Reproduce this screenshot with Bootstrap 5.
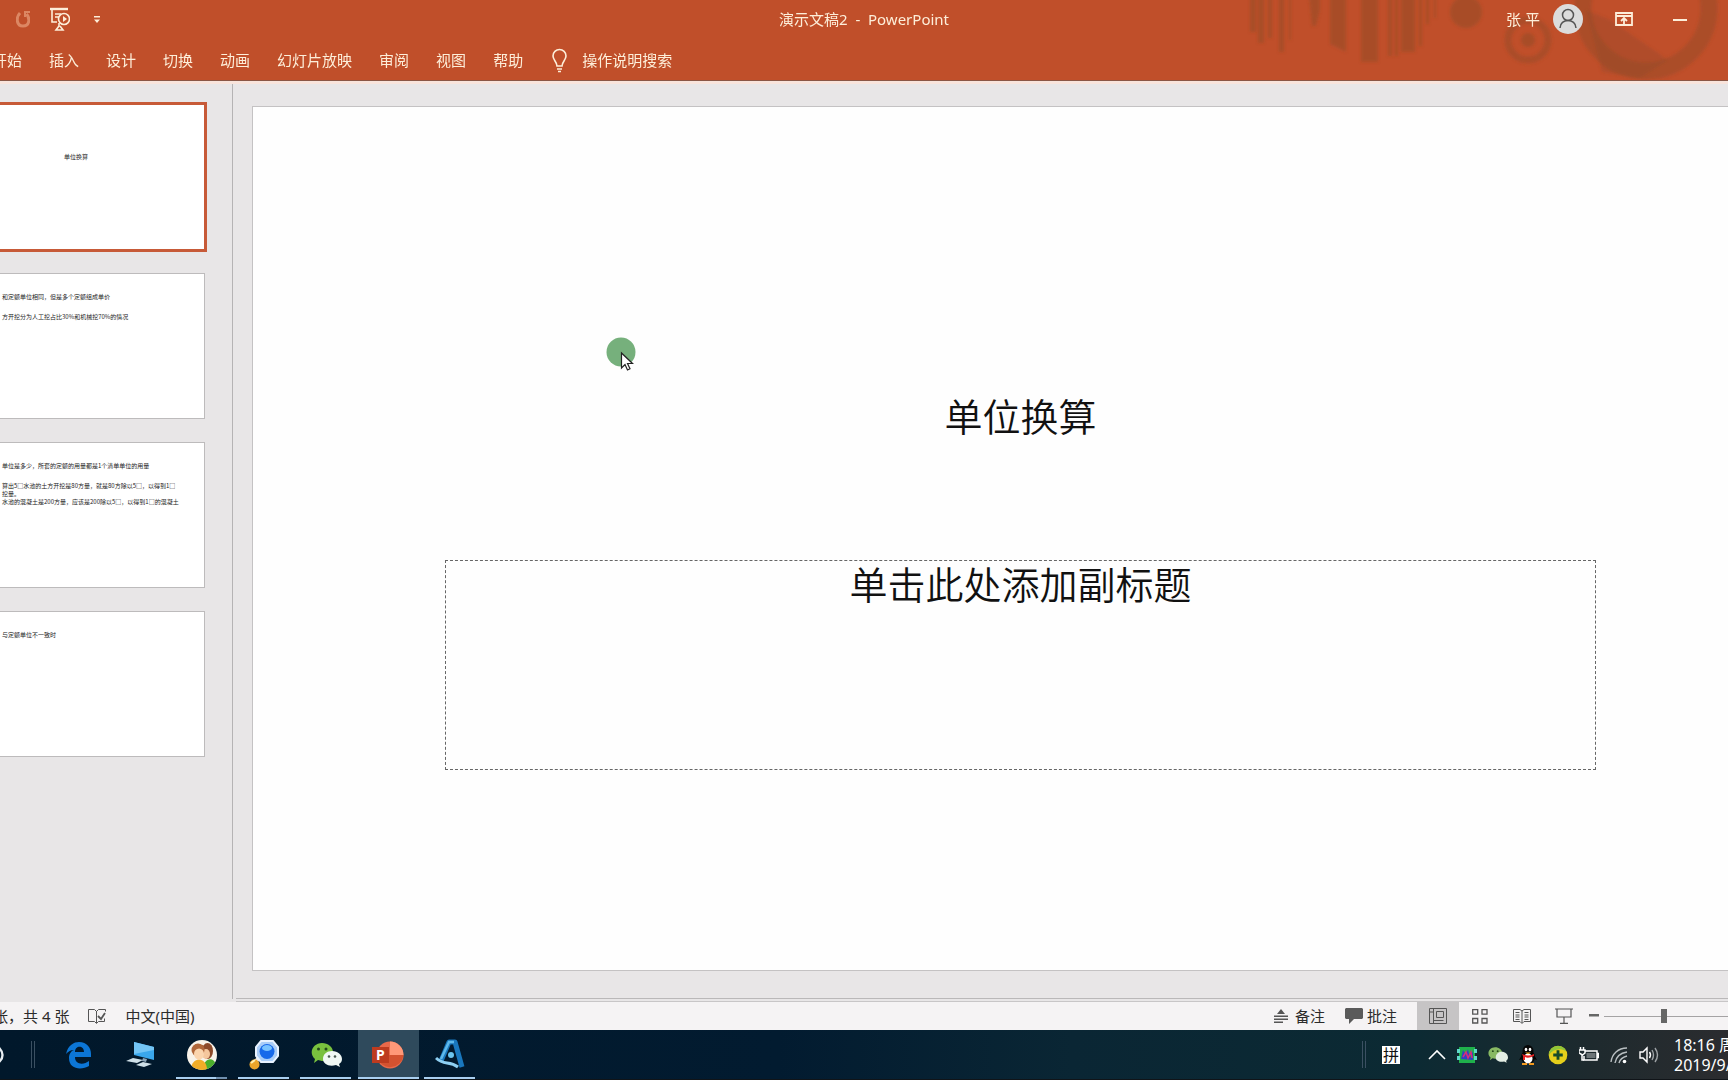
<!DOCTYPE html>
<html lang="zh-CN">
<head>
<meta charset="utf-8">
<meta name="viewport" content="width=device-width, initial-scale=1">
<title>演示文稿2 - PowerPoint</title>
<link rel="stylesheet" href="https://cdn.jsdelivr.net/npm/bootstrap@5.3.0/dist/css/bootstrap.min.css">
<style>
body{font-family:"Noto Sans","Noto Sans CJK SC",sans-serif;font-size:15px;line-height:20px;background:#e8e6e7;color:#222}
button{font:inherit;color:inherit;background:none;border:0;padding:0}
svg{display:block;flex:none}
.app-head{background:#c04f2a;color:#fdeed9;border-bottom:1px solid #8a5645;height:81px}
.head-art{right:0;top:0}
.title-row{height:37px}
.title-side{flex:1 1 0}
.tabs-row{height:46px;gap:27px;margin-left:-8px}
.tell-me{gap:14px}
.avatar-dot{width:30px;height:30px;background:#dcdcdc;color:#555;margin:0 24px 0 13px}
.work-area{border-top:3px solid #f8e4dc}
.thumb-pane{width:233px;border-right:1px solid #b5b3b4;padding-top:20px;gap:23px;margin-bottom:3px}
.thumb-slide{width:258px;height:146px;margin-left:-53px;flex:none;background:#fff;border:1px solid #bdbbbc;text-align:left;font-family:"Noto Sans CJK SC",sans-serif;font-size:6px;line-height:8px;color:#222;padding:19px 0 0 54px;white-space:nowrap;overflow:hidden;display:flex;flex-direction:column}
.thumb-slide.active{border-color:#c75a38;box-shadow:0 0 0 2px #c75a38;padding:48px 0 0;text-align:center}
.thumb-body{margin-top:12px}
.stage{padding:22px 0 0 19px}
.stage-foot{border-top:1px solid #bab8b9;height:4px;margin-left:3px;border-bottom:1px solid #c8c6c7}
.slide-page{width:1537px;height:865px;flex:none;background:#fefefe;border:1px solid #c4c2c3;color:#111;font-family:"Noto Sans CJK SC",sans-serif;font-weight:350;font-size:38px;line-height:44px;padding-top:286px}
.sub-box{width:75%;height:210px;border:1px dashed #666;margin-top:123px}
.click-mark{left:606px;top:337px}
.status-bar{height:28px;background:#f5f3f4;color:#2b2b2b}
.status-left{gap:19px;margin-left:-7px}
.view-btn{width:42px;height:28px;display:flex;align-items:center;justify-content:center;color:#666}
.view-btn.active{background:#c6c4c5}
.zoom-range{appearance:none;-webkit-appearance:none;width:124px;height:16px;background:linear-gradient(#a5a3a4,#a5a3a4) center/100% 1px no-repeat;margin:0}
.zoom-range::-webkit-slider-thumb{-webkit-appearance:none;width:6px;height:14px;background:#666;border:0}
.task-bar{height:50px;background:linear-gradient(90deg,#01182b 0%,#021b30 45%,#0a2634 62%,#0c2a33 82%,#1e2a2e 92%,#2b2c2f 100%);color:#fff;border-bottom:1px solid #101418}
.task-btn{width:62px;height:50px;display:flex;align-items:center;justify-content:center;position:relative}
.task-btn.running::after{content:"";position:absolute;left:5px;right:6px;bottom:0;height:3px;background:#a9cff0}
.task-btn.grouped::after{background:linear-gradient(90deg,#a9cff0 78%,#6f8fae 78%)}
.task-btn.front::before{content:"";position:absolute;inset:0 0 0 1px;background:#2f4a5c}
.task-btn.front::after{left:1px;right:0}
.task-btn svg{position:relative}
.bar-pair{width:4px;height:27px;border:solid #3b5062;border-width:0 1px}
.ime-box{width:18px;height:18px;background:#fff;color:#111;font-size:16px;line-height:18px;text-align:center}
.tray-set{gap:11px;margin:0 15px 0 11px}
.clock{width:54px;font-size:16px;white-space:nowrap;text-align:left}
</style>
<script src="https://cdn.jsdelivr.net/npm/bootstrap@5.3.0/dist/js/bootstrap.bundle.min.js"></script>
</head>
<body class="vh-100 d-flex flex-column overflow-hidden position-relative">

<header class="app-head flex-shrink-0 position-relative overflow-hidden">
  <svg class="head-art position-absolute" width="488" height="80" viewBox="1240 0 488 80" aria-hidden="true">
    <defs><filter id="soft" x="-5%" y="-5%" width="110%" height="110%"><feGaussianBlur stdDeviation="1.5"/></filter></defs>
    <g filter="url(#soft)">
    <g fill="#8c4a28" opacity=".45">
      <rect x="1250" y="-5" width="6" height="37"/><rect x="1258" y="-5" width="6" height="48"/><rect x="1268" y="-5" width="4" height="43"/><rect x="1279" y="-5" width="5" height="57"/><rect x="1289" y="-5" width="2" height="45"/>
      <path d="M1309-5h11v15l-4 16h-4z"/><path d="M1330-5h16v57l-16-8z"/><rect x="1361" y="-5" width="17" height="67"/>
      <rect x="1388" y="-5" width="4" height="61"/><rect x="1395" y="-5" width="3" height="61"/><rect x="1401" y="-5" width="14" height="57"/><rect x="1419" y="-5" width="3" height="51"/><rect x="1426" y="-5" width="3" height="29"/><rect x="1434" y="-5" width="2" height="23"/>
      <circle cx="1466" cy="12" r="16"/><circle cx="1528" cy="40" r="7"/>
      <path d="M1586 10L1610 20 1668 60 1640 78 1602 72z" opacity=".7"/>
    </g>
    <circle cx="1528" cy="40" r="20" fill="none" stroke="#8c4a28" stroke-width="7" opacity=".4"/>
    <circle cx="1646" cy="8" r="63" fill="none" stroke="#8c4a28" stroke-width="17" opacity=".4"/>
    </g>
  </svg>
  <div class="title-row d-flex align-items-center position-relative">
    <div class="title-side d-flex align-items-center">
      <button class="ms-3" aria-label="恢复" disabled><svg width="14" height="18" viewBox="0 0 14 18" fill="none" stroke="#dc8763" stroke-width="3"><path d="M4 3C0 7 0 16 7 16s7-8 3.500-12"/><path d="M9 1v6M8 2h6" stroke-width="2"/></svg></button>
      <button class="ms-3" aria-label="从头开始"><svg class="ms-1" width="20" height="24" viewBox="0 0 20 24" fill="none" stroke="#fdeed9" stroke-width="1.6"><path d="M0 2h18" stroke-width="2.4"/><path d="M2 3v12h5M5 7h6M5 10h4M9 16v3l-3 4h7l-3-4"/><circle cx="14" cy="12" r="5.5"/><path d="M13 9l4 3-4 3z" fill="#fdeed9" stroke="none"/></svg></button>
      <button class="ms-4" aria-label="自定义快速访问工具栏"><svg width="6" height="12" viewBox="0 0 6 12" fill="#fdeed9"><path d="M0 3h6v1.5H0zM0 6.500h6L3 10z"/></svg></button>
    </div>
    <div style="white-space:pre">演示文稿2  -  PowerPoint</div>
    <div class="title-side d-flex align-items-center justify-content-end">
      <span>张 平</span>
      <button class="avatar-dot rounded-circle d-flex justify-content-center align-items-center" aria-label="账户"><svg width="20" height="22" viewBox="0 0 20 22" fill="none" stroke="#555" stroke-width="1.5"><circle cx="10" cy="7" r="5.500"/><path d="M2 20c0-10 16-10 16 0"/></svg></button>
      <button class="ps-2" aria-label="功能区显示选项"><svg width="18" height="14" viewBox="0 0 18 14" fill="none" stroke="#fdeed9" stroke-width="1.800"><path d="M1 1h16v12H1zM1 4h16M9 13V6M6 9l3-3 3 3"/></svg></button>
      <button class="ms-4 me-4 ps-3 pe-3" aria-label="最小化"><svg width="15" height="14" viewBox="0 0 15 14"><path d="M0 7h14v2H0z" fill="#fdeed9"/></svg></button>
    </div>
  </div>
  <nav class="tabs-row d-flex align-items-center position-relative">
    <button>开始</button><button>插入</button><button>设计</button><button>切换</button><button>动画</button><button>幻灯片放映</button><button>审阅</button><button>视图</button><button>帮助</button>
    <button class="tell-me d-flex align-items-center"><svg width="18" height="28" viewBox="-2 0 18 28" fill="none" stroke="#fdeed9" stroke-width="1.600"><path d="M5 20c0-4-4-6-4-10a6.500 6.500 0 0 1 13 0c0 4-4 6-4 10z"/><path d="M5 23h5M6 25.500h3"/></svg>操作说明搜索</button>
  </nav>
</header>

<main class="work-area d-flex flex-grow-1 overflow-hidden">
  <aside class="thumb-pane d-flex flex-column flex-shrink-0 overflow-hidden" aria-label="幻灯片">
    <button class="thumb-slide active"><span>单位换算</span></button>
    <button class="thumb-slide"><span>和定额单位相同，但是多个定额组成单价</span><span class="thumb-body">方开挖分为人工挖占比30%和机械挖70%的情况</span></button>
    <button class="thumb-slide"><span>单位是多少，所套的定额的用量都是1个清单单位的用量</span><span class="thumb-body">算出5□水池的土方开挖是80方量，就是80方除以5□，以得到1□<br>挖量。<br>水池的混凝土是200方量，应该是200除以5□，以得到1□的混凝土</span></button>
    <button class="thumb-slide"><span>与定额单位不一致时</span></button>
  </aside>
  <section class="d-flex flex-column flex-grow-1 overflow-hidden">
    <div class="stage flex-grow-1 overflow-hidden">
      <article class="slide-page text-center">
        <div>单位换算</div>
        <div class="sub-box mx-auto">单击此处添加副标题</div>
      </article>
    </div>
    <div class="stage-foot flex-shrink-0"></div>
  </section>
</main>

<footer class="status-bar d-flex align-items-center flex-shrink-0 overflow-hidden text-nowrap">
  <div class="status-left d-flex align-items-center">
  <span>张，共 4 张</span>
  <button aria-label="拼写检查"><svg width="18" height="15" viewBox="0 0 18 15" fill="none" stroke="#555"><path d="M8.500 2.500L6.500.5h-6v12h6l2 2 2-2h6v-3M8.500 2v12M8.500 2.500l2-2h7v2" /><path d="M10 7l3 3 4-6" stroke-width="1.800"/></svg></button>
  <button>中文(中国)</button>
  </div>
  <div class="ms-auto d-flex align-items-center">
    <button class="d-flex align-items-center me-3"><svg class="me-1" width="17" height="14" viewBox="0 0 17 14" fill="#555"><path d="M3 5l4-5 4 5zM0 6.500h14V8H0zM0 9.500h14V11H0zM0 12.500h9V14H0z"/></svg>备注</button>
    <button class="d-flex align-items-center ms-1 me-3"><svg class="me-1" width="18" height="16" viewBox="0 0 18 16" fill="#5a5a5a"><path d="M1 0h16l1 1v9l-1 1H9l-5 5v-5H1l-1-1V1z"/></svg>批注</button>
    <button class="view-btn active ms-1" aria-label="普通视图"><svg width="18" height="16" viewBox="0 0 18 16" fill="none" stroke="#555"><path d="M.5.5h17v15H.5zM4.500.5v15M7.500 3.500h7v6h-7zM4 12.500h10.500M1 4h3"/></svg></button>
    <button class="view-btn" aria-label="幻灯片浏览"><svg width="16" height="15" viewBox="0 0 16 15" fill="none" stroke="#555" stroke-width="1.300"><path d="M.7.700h5v4.500h-5zM10 .7h5v4.500h-5zM.7 9.500h5V14h-5zM10 9.500h5V14h-5z"/></svg></button>
    <button class="view-btn" aria-label="阅读视图"><svg width="18" height="15" viewBox="0 0 18 15" fill="none" stroke="#555"><path d="M9 2L7 .5H.5v12H7l2 2 2-2h6.500V.5H11zM9 2v12M2.500 3.500h4M2.500 6h4M2.500 8h4M2.500 10.500h4M11.500 3.500h4M11.500 6h4M11.500 8h4M11.500 10.500h4"/></svg></button>
    <button class="view-btn" aria-label="幻灯片放映"><svg width="18" height="16" viewBox="0 0 18 16" fill="none" stroke="#555" stroke-width="1.200"><path d="M0 1h18M2 1v8h14V1M9 9v6M5 15.300h8"/></svg></button>
    <button class="ms-1 me-1" aria-label="缩小"><svg width="11" height="14" viewBox="0 0 11 14"><path d="M0 5h10v2.500H0z" fill="#666"/></svg></button>
    <input class="zoom-range" type="range" min="0" max="100" value="48" aria-label="显示比例">
  </div>
</footer>

<div class="task-bar d-flex align-items-center flex-shrink-0 overflow-hidden">
  <button aria-label="Cortana"><svg width="31" height="26" viewBox="0 0 31 26"><circle cx="-6" cy="13" r="8.500" fill="none" stroke="#e8eef2" stroke-width="2.400"/></svg></button>
  <span class="bar-pair me-2"></span>
  <div class="d-flex ms-1">
    <button class="task-btn" aria-label="Edge"><svg width="25" height="28" viewBox="0 0 25 28" fill="#0c76d6"><path d="M0 13C2 4 8 1 13 1c8 0 12 6 12 12v3H9c0 8 9 8 14 4v5c-7 4-20 4-20-8 0-4 2-7 5-8-4 0-6 2-8 4zm9-2h9c0-7-9-7-9 0z"/></svg></button>
    <button class="task-btn" aria-label="此电脑"><svg width="28" height="27" viewBox="0 0 28 27"><path d="M8 1l20 5v13L8 14z" fill="#3aa7ec"/><path d="M8 1l20 5v3L8 13z" fill="#73c5f5"/><path d="M17 17l-1 3 4 1 1-3z" fill="#8da5b8"/><path d="M7 17l10 2-6 3-11-2zM17 21l9 2-8 3-8-2z" fill="#cfe0e8"/></svg></button>
    <button class="task-btn running grouped" aria-label="联系人"><svg width="30" height="30" viewBox="0 0 30 30"><defs><clipPath id="pc"><circle cx="15" cy="15" r="15"/></clipPath></defs><g clip-path="url(#pc)"><path d="M0 0h30v30H0z" fill="#f8f3ea"/><path d="M16 30c0-12 10-14 13-6v6z" fill="#4caf2c"/><path d="M4 30c0-14 16-14 16 0z" fill="#f2ad28"/><ellipse cx="20.500" cy="11" rx="5.500" ry="8" fill="#8d4a2a"/><ellipse cx="19" cy="14" rx="4" ry="5" fill="#f5c79d"/><ellipse cx="11" cy="10" rx="6.500" ry="6.500" fill="#b0673a"/><ellipse cx="12" cy="14" rx="5" ry="5.500" fill="#fbd5ae"/><path d="M6 12c2-4 6-5 11-3l-1-4-7-1-3 4z" fill="#b0673a"/></g></svg></button>
    <button class="task-btn running" aria-label="搜索"><svg width="30" height="30" viewBox="0 0 30 30"><path d="M11 17l-5 5" stroke="#e8e8e8" stroke-width="4"/><ellipse cx="5.500" cy="24.500" rx="5" ry="5" fill="#eba52b"/><path d="M2 23l4-3" stroke="#fff0b0" stroke-width="2"/><path d="M12 1h12l5 6v9l-5 6H12l-5-6V7z" fill="#a9cdf8" stroke="#e8f2ff" stroke-width="2"/><circle cx="18" cy="11.500" r="7.500" fill="#1769ea"/><ellipse cx="18" cy="8" rx="5" ry="3" fill="#79c3ff"/></svg></button>
    <button class="task-btn running" aria-label="微信"><svg width="31" height="26" viewBox="0 0 31 26"><path d="M11 1c6 0 11 4 11 9s-5 9-11 9l-4-1-4 3 1-4C-3 11 2 1 11 1z" fill="#79c13e"/><circle cx="7.500" cy="7" r="1.500" fill="#25491b"/><circle cx="15" cy="7" r="1.500" fill="#25491b"/><path d="M21 9c6 0 10 4 10 8 0 2-1 4-3 5l1 3-4-2c-7 2-13-1-13-6s4-8 9-8z" fill="#f0f7f4"/><circle cx="18" cy="14.500" r="1.300" fill="#47584f"/><circle cx="24" cy="14.500" r="1.300" fill="#47584f"/></svg></button>
    <button class="task-btn running front" aria-label="PowerPoint"><svg width="32" height="28" viewBox="0 0 32 28"><circle cx="18" cy="14" r="13.500" fill="#e9694a"/><path d="M18 .5A13.500 13.500 0 0 1 31.500 14H18z" fill="#ff9878"/><path d="M5 16a13.500 13.500 0 0 0 26.500-2H18z" fill="#d35230"/><path d="M0 6h17v16H0z" fill="#bd3b1f"/><text x="4" y="19" font-size="14" font-weight="700" fill="#fff" font-family="Noto Sans, sans-serif">P</text></svg></button>
    <button class="task-btn running" aria-label="应用"><svg width="30" height="31" viewBox="0 0 30 31" fill="none"><path d="M6 22L14 3h6l7 25" stroke="#1977bd" stroke-width="5" stroke-linejoin="round"/><path d="M6 20L14 3h5" stroke="#5fb9ea" stroke-width="2.500"/><path d="M1 19c8 8 13 2 22 9" stroke="#8fd0f2" stroke-width="3"/><circle cx="16" cy="16" r="3" fill="#6cc5ef"/></svg></button>
  </div>

  <div class="ms-auto d-flex align-items-center">
    <span class="bar-pair me-3"></span>
    <button class="ime-box" aria-label="输入法">拼</button>
    <button class="ms-4" aria-label="显示隐藏的图标"><svg class="ms-1" width="18" height="12" viewBox="0 0 18 12" fill="none" stroke="#fff" stroke-width="1.600"><path d="M1 10l8-8 8 8"/></svg></button>
    <div class="tray-set d-flex align-items-center">
    <svg width="20" height="18" viewBox="0 0 20 18"><path d="M2 1h16v16H2z" fill="#1fb14b"/><path d="M0 3h3v4H0zM0 10h3v4H0zM17 3h3v4h-3zM17 10h3v4h-3z" fill="#5fd8c8"/><path d="M4 13l2-9 3 5 2-6 2 9 3-7v9z" fill="#323fc4"/><path d="M6 11l3-5 2 6 3-6 1 6" fill="none" stroke="#d82b7b" stroke-width="1.500"/></svg>
    <svg width="20" height="18" viewBox="0 0 31 26"><path d="M11 1c6 0 11 4 11 9s-5 9-11 9l-4-1-4 3 1-4C-3 11 2 1 11 1z" fill="#88b963"/><circle cx="7.500" cy="7" r="1.500" fill="#25491b"/><circle cx="15" cy="7" r="1.500" fill="#25491b"/><path d="M21 8c6 0 10 4 10 9 0 2-1 4-3 5l1 3-4-2c-7 2-13-1-13-6s4-9 9-9z" fill="#e4eee4"/></svg>
    <svg width="18" height="20" viewBox="0 0 18 20"><path d="M3 10L0 15l3-1zM15 10l3 5-3-1z" fill="#000"/><ellipse cx="9" cy="12" rx="7" ry="7" fill="#050505"/><ellipse cx="9" cy="6" rx="5.500" ry="6" fill="#050505"/><ellipse cx="9" cy="13.500" rx="4.500" ry="5" fill="#fff"/><ellipse cx="7" cy="4.500" rx="1.300" ry="1.700" fill="#fff"/><ellipse cx="11" cy="4.500" rx="1.300" ry="1.700" fill="#fff"/><path d="M6 7.500h6L9 9z" fill="#f8b21c"/><path d="M3 9q6 3 12 0v2q-6 3-9 1v3H4v-4z" fill="#e32222"/><path d="M3 18h5v2H3zM10 18h5v2h-5z" fill="#f39a1e"/></svg>
    <svg width="20" height="20" viewBox="0 0 21 20"><circle cx="10.500" cy="10" r="9.800" fill="#e6cf1b"/><path d="M1 10C1-2 17-2 19 6 12 2 5 4 1 10z" fill="#8fc53a"/><path d="M9 5h3v3.500h3.500v3H12V15H9v-3.500H5.500v-3H9z" fill="#174a2a"/></svg>
    <svg width="20" height="16" viewBox="1 0 20 16" fill="none" stroke="#fff" stroke-width="1.500"><path d="M7 4h12v9H6V9M19.500 6.500h1v4h-1"/><path d="M1 3h6v3L4.500 8 1 6zM2.500 0v3M5.500 0v3M4 8v5h2"/><path d="M8.500 6h9v5h-9z" fill="#fff" stroke="none" opacity=".35"/></svg>
    <svg width="18" height="18" viewBox="0 0 18 18" fill="none" stroke="#b9bfc2" stroke-width="1.400"><path d="M1 16C2 8 8 2 17 2M5 17C6 11 10 7 17 6M9 17c1-4 4-6 8-7"/><circle cx="14.500" cy="15.500" r="1.800" fill="#fff" stroke="none"/></svg>
    <svg width="20" height="18" viewBox="0 0 20 18" fill="none" stroke="#fff" stroke-width="1.400"><path d="M1 6h3l4-4v14l-4-4H1z"/><path d="M10.500 6q2 3 0 6"/><path d="M13 4q3 5 0 10M16 2q5 7 0 14" stroke="#9da2a5"/></svg>
    </div>
    <button class="clock overflow-hidden">18:16 周<br>2019/9/</button>
  </div>
</div>

<svg class="click-mark position-absolute" width="32" height="36" viewBox="0 0 32 36" aria-hidden="true"><circle cx="15" cy="15" r="14.500" fill="#76b07c"/><path d="M15.500 16v15l3.500-3.500 2.500 5.500 2.500-1.200-2.500-5.300h5z" fill="#fff" stroke="#222" stroke-width="1.200"/></svg>
</body>
</html>
